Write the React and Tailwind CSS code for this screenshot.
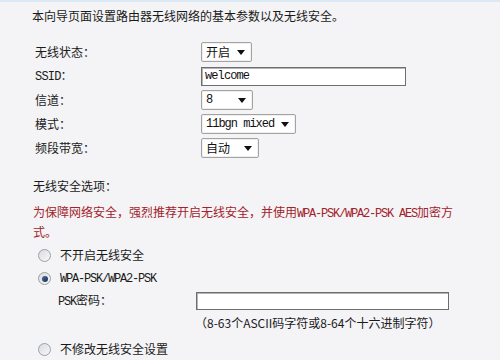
const cjk = { fontFamily: '"Noto Sans CJK SC", "Liberation Sans", sans-serif' };
const mono = { fontFamily: '"Liberation Mono", "Noto Sans CJK SC", monospace' };

function Arrow() {
  return (
    <svg width="8" height="5" viewBox="0 0 8 5" className="shrink-0">
      <path d="M0 0 H8 L4 5 Z" fill="#111" />
    </svg>
  );
}

function Select({ label, width, isMono }) {
  return (
    <div
      className={`flex items-center justify-between h-[20px] ${width} bg-white border border-[#a3a3a3] rounded-[2px] pl-[4px] pr-[6px] shadow-[inset_0_0_0_1px_#f0f0f0]`}
    >
      <span
        className={isMono ? "text-[12px] tracking-[-1px] text-[#111]" : "text-[12px] text-[#111]"}
        style={isMono ? mono : cjk}
      >
        {label}
      </span>
      <Arrow />
    </div>
  );
}

function Radio({ checked }) {
  return (
    <div className="w-[13px] h-[13px] rounded-full border border-[#9aa0a6] bg-gradient-to-br from-[#d9dcdf] to-[#f7f7f7] flex items-center justify-center shrink-0">
      {checked && (
        <div className="w-[6px] h-[6px] rounded-full bg-gradient-to-br from-[#4a6b9a] to-[#1c2f55]" />
      )}
    </div>
  );
}

function Row({ label, children }) {
  return (
    <div className="flex items-center h-[24px]">
      <div className="w-[166px] text-[12px] text-[#1a1a1a]" style={cjk}>{label}</div>
      {children}
    </div>
  );
}

// Latin run in the old "SimSun" look: monospace, 6px per glyph
function Latin({ children }) {
  return (
    <span className="text-[12px] tracking-[-1.2px]" style={mono}>{children}</span>
  );
}

export default function App() {
  return (
    <div
      className="w-[500px] h-[360px] overflow-hidden bg-[#f4f4f6] border-t-2 border-[#dbe9f5] text-[#1a1a1a]"
      style={cjk}
    >
      <div className="pt-[6px] pl-[32px]">
        <p className="h-[16px] leading-[16px] text-[12px]">
          本向导页面设置路由器无线网络的基本参数以及无线安全。
        </p>

        {/* ── Basic settings ─────────────────────────────── */}
        <div className="mt-[16px] pl-[3px]">
          <Row label="无线状态：">
            <Select label="开启" width="w-[51px]" />
          </Row>
          <Row label={<span><span style={mono} className="text-[12px] tracking-[-0.8px]">SSID</span>：</span>}>
            <div className="flex items-center h-[19px] w-[205px] bg-white border border-[#6e6e6e] shadow-[inset_1px_1px_0_#b5b5b5] pl-[3px]">
              <span className="text-[12px] tracking-[-0.9px] text-[#111]" style={mono}>welcome</span>
            </div>
          </Row>
          <Row label="信道：">
            <Select label="8" width="w-[52px]" isMono />
          </Row>
          <Row label="模式：">
            <Select label="11bgn mixed" width="w-[95px]" isMono />
          </Row>
          <Row label="频段带宽：">
            <Select label="自动" width="w-[58px]" />
          </Row>
        </div>

        {/* ── Security options ───────────────────────────── */}
        <p className="mt-[18px] h-[16px] leading-[16px] text-[12px] pl-[1px]">无线安全选项：</p>
        <p className="mt-[9px] leading-[18px] text-[12px] text-[#a3222b] pl-[1px] whitespace-nowrap">
          为保障网络安全，强烈推荐开启无线安全，并使用<Latin>WPA-PSK/WPA2-PSK AES</Latin>加密方
          <br />
          式。
        </p>

        <div className="mt-[2px] pl-[6px]">
          <div className="flex items-center gap-[9px] h-[24px]">
            <Radio />
            <span className="text-[12px]">不开启无线安全</span>
          </div>
          <div className="flex items-center gap-[9px] h-[23px]">
            <Radio checked />
            <Latin>WPA-PSK/WPA2-PSK</Latin>
          </div>
          <div className="flex items-center h-[22px] pl-[20px]">
            <span className="w-[138px] text-[12px]">
              <Latin>PSK</Latin>密码：
            </span>
            <div className="h-[18px] w-[253px] bg-white border border-[#6e6e6e] shadow-[inset_1px_1px_0_#b5b5b5]" />
          </div>
          <div className="flex items-center h-[22px] pl-[157px] text-[12px]">
            （8-63个ASCII码字符或8-64个十六进制字符）
          </div>
          <div className="mt-[3px] flex items-center gap-[9px] h-[24px]">
            <Radio />
            <span className="text-[12px]">不修改无线安全设置</span>
          </div>
        </div>
      </div>
    </div>
  );
}
